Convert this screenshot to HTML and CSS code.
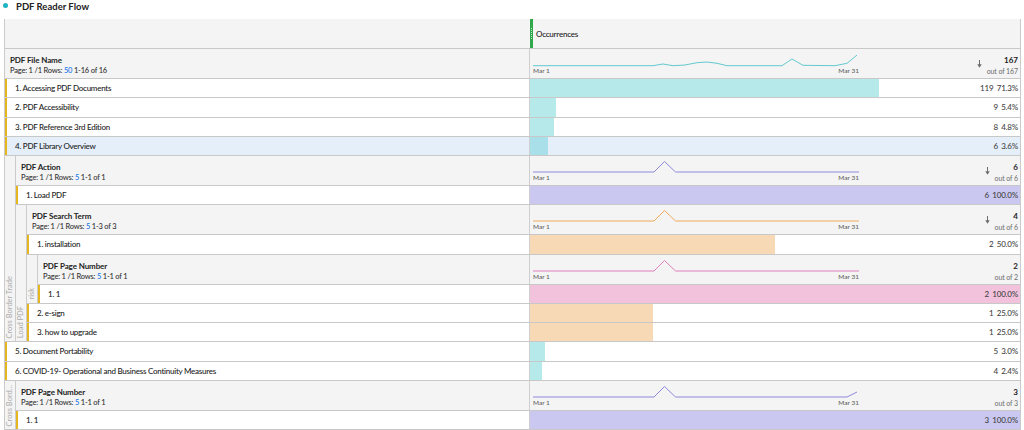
FILE: index.html
```html
<!DOCTYPE html>
<html>
<head>
<meta charset="utf-8">
<link rel="stylesheet" href="styles.css">
</head>
<body>
<div class="title"><span class="dot"></span><span>PDF Reader Flow</span></div>
<div class="table">
  <div class="colhead">
    <div class="lc"></div>
    <div class="rc"><span class="grip"><span class="gripdots"></span></span><span class="colname">Occurrences</span></div>
  </div>

  <div class="hdr">
    <div class="lc"><div class="hname">PDF File Name</div><div class="hmeta">Page: 1 /1 Rows: <span class="blue">50</span> 1-16 of 16</div></div>
    <div class="rc">
      <div class="spark">
        <svg viewBox="0 0 326 14"><polyline class="teal-l" points="0,12.7 120,12.7 130,11 140,12.7 152,12 164,9.7 174,9 184,10.3 194,12.7 249,12.7 259,6 270,12.3 302,12.7 314,10.3 324,2"/></svg>
        <div class="dates"><span>Mar 1</span><span>Mar 31</span></div>
      </div>
      <div class="tot"><svg class="arrow" viewBox="0 0 5 8"><line x1="2.5" y1="0" x2="2.5" y2="5"/><polygon points="0.3,4.3 4.7,4.3 2.5,7.8"/></svg><div class="totv"><b>167</b><span>out of 167</span></div></div>
    </div>
  </div>

  <div class="row"><div class="lc">1. Accessing PDF Documents</div><div class="rc"><div class="bar teal" style="width:71.3%"></div><span class="val">119 71.3%</span></div></div>
  <div class="row"><div class="lc">2. PDF Accessibility</div><div class="rc"><div class="bar teal" style="width:5.4%"></div><span class="val">9 5.4%</span></div></div>
  <div class="row"><div class="lc">3. PDF Reference 3rd Edition</div><div class="rc"><div class="bar teal" style="width:4.8%"></div><span class="val">8 4.8%</span></div></div>
  <div class="row sel"><div class="lc">4. PDF Library Overview</div><div class="rc"><div class="bar teal" style="width:3.6%"></div><span class="val">6 3.6%</span></div></div>

  <div class="grp">
    <div class="band"><span>Cross Border Trade</span></div>
    <div class="gbody">
      <div class="hdr">
        <div class="lc"><div class="hname">PDF Action</div><div class="hmeta">Page: 1 /1 Rows: <span class="blue">5</span> 1-1 of 1</div></div>
        <div class="rc">
          <div class="spark">
            <svg viewBox="0 0 326 14"><polyline class="purple-l" points="0,12 121,12 131.5,1.5 142.5,12 326,12"/></svg>
            <div class="dates"><span>Mar 1</span><span>Mar 31</span></div>
          </div>
          <div class="tot"><svg class="arrow" viewBox="0 0 5 8"><line x1="2.5" y1="0" x2="2.5" y2="5"/><polygon points="0.3,4.3 4.7,4.3 2.5,7.8"/></svg><div class="totv"><b>6</b><span>out of 6</span></div></div>
        </div>
      </div>
      <div class="row"><div class="lc">1. Load PDF</div><div class="rc"><div class="bar purple" style="width:100%"></div><span class="val">6 100.0%</span></div></div>

      <div class="grp">
        <div class="band"><span>Load PDF</span></div>
        <div class="gbody">
          <div class="hdr">
            <div class="lc"><div class="hname">PDF Search Term</div><div class="hmeta">Page: 1 /1 Rows: <span class="blue">5</span> 1-3 of 3</div></div>
            <div class="rc">
              <div class="spark">
                <svg viewBox="0 0 326 14"><polyline class="orange-l" points="0,12 121,12 131.5,1.5 142.5,12 326,12"/></svg>
                <div class="dates"><span>Mar 1</span><span>Mar 31</span></div>
              </div>
              <div class="tot"><svg class="arrow" viewBox="0 0 5 8"><line x1="2.5" y1="0" x2="2.5" y2="5"/><polygon points="0.3,4.3 4.7,4.3 2.5,7.8"/></svg><div class="totv"><b>4</b><span>out of 6</span></div></div>
            </div>
          </div>
          <div class="row"><div class="lc">1. installation</div><div class="rc"><div class="bar orange" style="width:50%"></div><span class="val">2 50.0%</span></div></div>

          <div class="grp">
            <div class="band"><span>risk</span></div>
            <div class="gbody">
              <div class="hdr">
                <div class="lc"><div class="hname">PDF Page Number</div><div class="hmeta">Page: 1 /1 Rows: <span class="blue">5</span> 1-1 of 1</div></div>
                <div class="rc">
                  <div class="spark">
                    <svg viewBox="0 0 326 14"><polyline class="pink-l" points="0,12 121,12 131.5,1.5 142.5,12 326,12"/></svg>
                    <div class="dates"><span>Mar 1</span><span>Mar 31</span></div>
                  </div>
                  <div class="tot"><div class="totv"><b>2</b><span>out of 2</span></div></div>
                </div>
              </div>
              <div class="row"><div class="lc">1. 1</div><div class="rc"><div class="bar pink" style="width:100%"></div><span class="val">2 100.0%</span></div></div>
            </div>
          </div>

          <div class="row"><div class="lc">2. e-sign</div><div class="rc"><div class="bar orange" style="width:25%"></div><span class="val">1 25.0%</span></div></div>
          <div class="row"><div class="lc">3. how to upgrade</div><div class="rc"><div class="bar orange" style="width:25%"></div><span class="val">1 25.0%</span></div></div>
        </div>
      </div>
    </div>
  </div>

  <div class="row"><div class="lc">5. Document Portability</div><div class="rc"><div class="bar teal" style="width:3%"></div><span class="val">5 3.0%</span></div></div>
  <div class="row"><div class="lc">6. COVID-19- Operational and Business Continuity Measures</div><div class="rc"><div class="bar teal" style="width:2.4%"></div><span class="val">4 2.4%</span></div></div>

  <div class="grp">
    <div class="band"><span>Cross Bord...</span></div>
    <div class="gbody">
      <div class="hdr">
        <div class="lc"><div class="hname">PDF Page Number</div><div class="hmeta">Page: 1 /1 Rows: <span class="blue">5</span> 1-1 of 1</div></div>
        <div class="rc">
          <div class="spark">
            <svg viewBox="0 0 326 14"><polyline class="purple-l" points="0,12 121,12 131.5,1.5 142.5,12 314,12 324,7"/></svg>
            <div class="dates"><span>Mar 1</span><span>Mar 31</span></div>
          </div>
          <div class="tot"><div class="totv"><b>3</b><span>out of 3</span></div></div>
        </div>
      </div>
      <div class="row"><div class="lc">1. 1</div><div class="rc"><div class="bar purple" style="width:100%"></div><span class="val">3 100.0%</span></div></div>
    </div>
  </div>
</div>
</body>
</html>
```

FILE: styles.css
```css
* { box-sizing: border-box; }
html, body { margin: 0; padding: 0; background: #fff; }
body {
  font-family: Lato, "Open Sans", sans-serif;
  color: #222;
  overflow: hidden;
}

.title {
  height: 19px;
  display: flex;
  align-items: flex-start;
  padding: 1px 0 0 3px;
  font-size: 9.5px;
  font-weight: 700;
  line-height: 12px;
}
.dot {
  width: 5px;
  height: 5px;
  border-radius: 50%;
  background: #1fb3c2;
  margin: 2px 8px 0 0;
}

.table {
  margin-left: 4px;
  width: 1017px;
  border-left: 1px solid #cbcbcb;
  border-right: 1px solid #cbcbcb;
}

.colhead {
  height: 30px;
  display: flex;
  background: #f4f4f4;
  border-bottom: 1px solid #c8c8c8;
}
.colhead .lc { flex: 1; }
.colhead .rc {
  width: 490px;
  display: flex;
  align-items: stretch;
}
.grip {
  width: 3px;
  background: #2ea84a;
  display: flex;
  align-items: center;
  justify-content: center;
}
.gripdots {
  width: 1px;
  height: 11px;
  background: repeating-linear-gradient(to bottom, #bfe8c8 0 1px, transparent 1px 2px);
}
.colname {
  font-size: 8px;
  font-weight: 500;
  letter-spacing: -0.2px;
  align-self: center;
  margin-left: 3px;
  margin-top: 1px;
}

.row {
  display: flex;
  height: 19.25px;
  border-bottom: 1px solid #c8c8c8;
  background: #fff;
}
.row .lc {
  flex: 1;
  min-width: 0;
  border-left: 2px solid #e6b620;
  border-right: 1px solid #cfcfcf;
  padding-left: 8px;
  display: flex;
  align-items: center;
  font-size: 8px;
  font-weight: 500;
  letter-spacing: -0.25px;
  white-space: nowrap;
}
.row.sel { background: #e5effa; }
.row.sel .bar.teal { background: #a8dfe8; }

.rc {
  width: 490px;
  flex: none;
}
.row .rc {
  display: grid;
}
.row .rc > * { grid-area: 1 / 1; }
.bar { height: 100%; }
.bar.teal { background: #b6eaea; }
.bar.purple { background: #cac8f0; }
.bar.orange { background: #f8d9b6; }
.bar.pink { background: #f2c2dd; }
.val {
  justify-self: end;
  align-self: center;
  padding-right: 2px;
  font-size: 8px;
  font-weight: 500;
  letter-spacing: -0.2px;
  word-spacing: 1.5px;
  color: #444;
  white-space: nowrap;
}

.hdr {
  display: flex;
  height: 30px;
  background: #f4f4f4;
  border-bottom: 1px solid #c8c8c8;
}
.hdr .lc {
  flex: 1;
  min-width: 0;
  padding: 5px 0 0 5px;
  border-right: 1px solid #cfcfcf;
  white-space: nowrap;
}
.hname {
  font-weight: 700;
  font-size: 8px;
  letter-spacing: -0.1px;
  line-height: 12px;
}
.hmeta {
  font-size: 7.5px;
  font-weight: 500;
  letter-spacing: -0.2px;
  line-height: 10px;
  color: #333;
}
.blue { color: #1473e6; }

.hdr .rc {
  display: flex;
  justify-content: space-between;
  padding: 0 2px 0 3px;
}
.spark {
  width: 326px;
  padding-top: 4px;
  display: flex;
  flex-direction: column;
}
.spark svg {
  display: block;
  width: 326px;
  height: 14px;
  overflow: visible;
}
.spark polyline { fill: none; stroke-width: 1; }
.teal-l { stroke: #62c9d0; }
.purple-l { stroke: #8e88dc; }
.orange-l { stroke: #f1aa5c; }
.pink-l { stroke: #e07fbb; }
.dates {
  display: flex;
  justify-content: space-between;
  font-size: 6.5px;
  font-weight: 500;
  line-height: 8px;
  color: #5e5e5e;
}

.tot {
  display: flex;
  align-items: flex-start;
  gap: 5px;
  padding-top: 5px;
}
.arrow {
  width: 5px;
  height: 8px;
  margin-top: 6px;
}
.arrow line { stroke: #6e6e6e; stroke-width: 1; }
.arrow polygon { fill: #6e6e6e; }
.totv {
  display: flex;
  flex-direction: column;
  align-items: flex-end;
}
.totv b {
  font-size: 8px;
  line-height: 12px;
  font-weight: 700;
}
.totv span {
  font-size: 7px;
  line-height: 10px;
  letter-spacing: -0.1px;
  color: #6e6e6e;
}

.grp { display: flex; }
.band {
  width: 10px;
  flex: none;
  background: #f4f4f4;
  border-bottom: 1px solid #c8c8c8;
  display: flex;
  flex-direction: column;
  justify-content: flex-end;
  align-items: center;
  padding-bottom: 3px;
  overflow: hidden;
}
.band span {
  writing-mode: vertical-rl;
  transform: rotate(180deg);
  font-size: 7.5px;
  line-height: 10px;
  color: #ababab;
  white-space: nowrap;
}
.gbody {
  flex: 1;
  min-width: 0;
  border-left: 1px solid #cbcbcb;
}
```
